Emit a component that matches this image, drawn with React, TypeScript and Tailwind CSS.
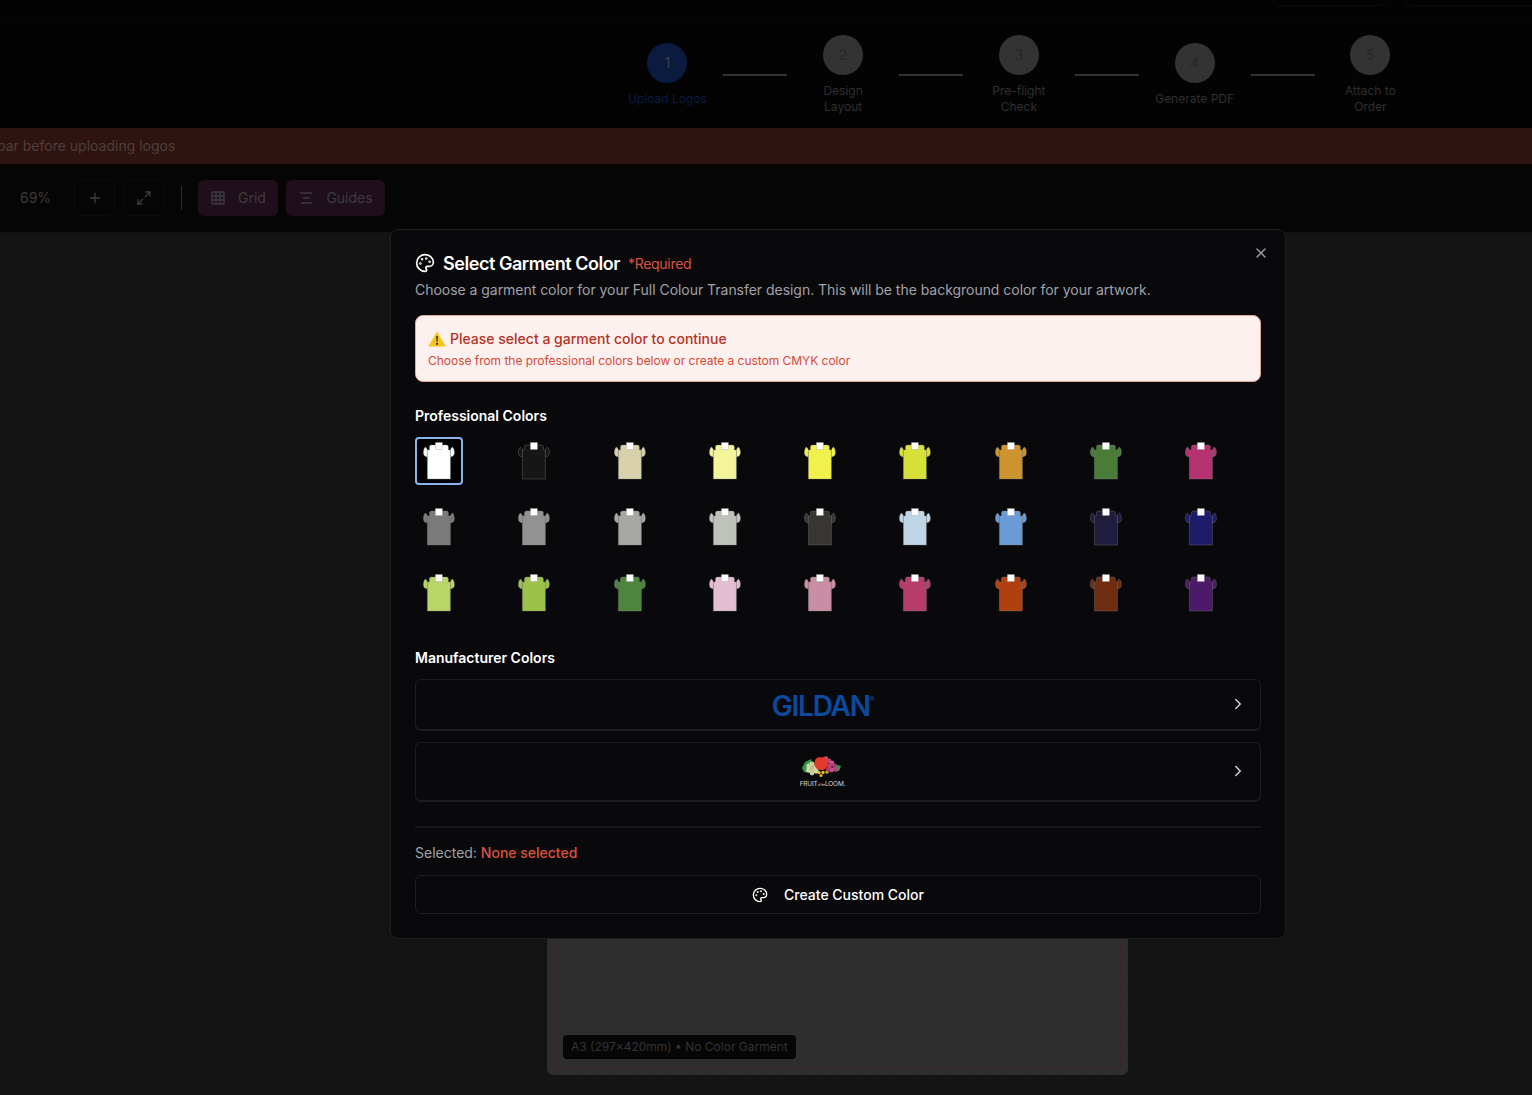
import { ChevronRight, Grid3x3, Maximize2, Palette, Plus, X } from "lucide-react";

const steps = [
  { n: 1, label: ["Upload Logos"], active: true },
  { n: 2, label: ["Design", "Layout"] },
  { n: 3, label: ["Pre-flight", "Check"] },
  { n: 4, label: ["Generate PDF"] },
  { n: 5, label: ["Attach to", "Order"] },
];

const garmentColors = [
  "#ffffff", "#161616", "#d8d1ac", "#f4f49a", "#f2f14b", "#d6e038", "#cc932e", "#4a7c38", "#b4326f",
  "#7a7a7a", "#939393", "#a7a8a3", "#bfc1bb", "#383632", "#bed6e6", "#6a9bd6", "#1f1c3e", "#1f1b6b",
  "#b8d665", "#9cc24a", "#4e853c", "#e3bfd1", "#c98ea3", "#b63c6a", "#b0400f", "#6e2c10", "#4b1a68",
];

function Shirt({ color }: { color: string }) {
  return (
    <svg width="48" height="48" viewBox="0.6 0 48 48" className="shrink-0">
      <g fill={color} stroke="#8a8a8a" strokeOpacity="0.55" strokeWidth="0.6">
        <path d="M13 20C10.5 19.5 9 18.5 9 15.5C9 13 10 10.5 11 10C12 11 13 12 13 13Z" />
        <path d="M36 20C38.5 19.5 40 18.5 40 15.5C40 13 39 10.5 38 10C37 11 36 12 36 13Z" />
        <path d="M13 42V13H15V10Q15 8 17 8H32Q34 8 34 10V13H36V42Z" />
      </g>
      <rect x="21" y="5.5" width="7" height="7" fill="#fff" stroke="#8a8a8a" strokeOpacity="0.6" strokeWidth="0.5" />
    </svg>
  );
}

function FruitLogo() {
  return (
    <div className="flex flex-col items-center">
      <svg width="40" height="22" viewBox="0 0 40 22">
        <path d="M0 12L3 6L9 3L13 14L8 17L2 16Z" fill="#2f9a45" />
        <path d="M32 8L39 10L37 15L30 15Z" fill="#2f9a45" />
        <circle cx="7" cy="10" r="2.6" fill="#d3d6a8" />
        <circle cx="10" cy="8" r="2.6" fill="#c9cd9c" />
        <circle cx="6.5" cy="14" r="2.5" fill="#d3d6a8" />
        <circle cx="10" cy="13" r="2.6" fill="#bfc48f" />
        <circle cx="14" cy="15" r="2.6" fill="#d3d6a8" />
        <circle cx="10" cy="17" r="2.4" fill="#c9cd9c" />
        <circle cx="14" cy="11" r="2.6" fill="#d3d6a8" />
        <circle cx="17" cy="16.5" r="1.7" fill="#e3b92f" />
        <circle cx="21" cy="16.5" r="1.7" fill="#e3b92f" />
        <circle cx="25" cy="16" r="1.7" fill="#e3b92f" />
        <circle cx="19" cy="19.5" r="1.5" fill="#e3b92f" />
        <circle cx="24" cy="2.5" r="2.2" fill="#c64f86" />
        <circle cx="27" cy="5" r="2.4" fill="#b8447c" />
        <circle cx="30" cy="7" r="2.4" fill="#c64f86" />
        <circle cx="27.5" cy="10" r="2.4" fill="#b8447c" />
        <circle cx="32.5" cy="10" r="2.4" fill="#a93a70" />
        <circle cx="29.5" cy="14" r="2.4" fill="#c64f86" />
        <circle cx="34" cy="13.5" r="2.3" fill="#b8447c" />
        <circle cx="26" cy="13.5" r="2.2" fill="#a93a70" />
        <path d="M19 1.5C23 0.5 26 3 26 7C26 11 23 14.5 19.5 14C15.5 14.5 12 11 12.5 7C12.5 3 15.5 0.5 19 1.5Z" fill="#e5392b" />
      </svg>
      <span className="text-[6.5px] leading-[7px] text-[#d8d8d8] mt-[3px] tracking-tight whitespace-nowrap">
        FRUIT<span className="text-[3px]">of the</span>LOOM.
      </span>
    </div>
  );
}

function PageBehind() {
  return (
    <>
      <header className="bg-[#030303]">
        <div className="h-[23px] border-b border-[#060606] flex justify-end gap-[19px]">
          <div className="w-[114px] h-[6px] border border-t-0 border-[#0b0b0b] rounded-b-md" />
          <div className="w-[127px] h-[6px] border border-t-0 border-r-0 border-[#0b0b0b] rounded-bl-md" />
        </div>
        <div className="h-[105px] pb-px flex items-center justify-end pr-[105.75px]">
          {steps.map((step, i) => (
            <div key={step.n} className="flex items-center">
              {i > 0 && <div className="w-16 h-0.5 bg-[#333333]" />}
              <div className="w-[111.75px] flex flex-col items-center">
                <div
                  className={
                    step.active
                      ? "w-10 h-10 rounded-full bg-[#0a1b3f] flex items-center justify-center text-sm text-[#3a4150]"
                      : "w-10 h-10 rounded-full bg-[#333333] flex items-center justify-center text-sm text-[#272727]"
                  }
                >
                  {step.n}
                </div>
                <div className={step.active ? "mt-2 text-xs text-center text-[#0c1c40]" : "mt-2 text-xs text-center text-[#2f2f2f]"}>
                  {step.label.map((line) => (
                    <div key={line}>{line}</div>
                  ))}
                </div>
              </div>
            </div>
          ))}
        </div>
      </header>

      <div className="h-9 bg-[#2f1310] flex items-center overflow-hidden">
        <span className="text-sm text-[#4b403e] whitespace-nowrap -ml-[3px]">bar before uploading logos</span>
      </div>

      <div className="h-[69px] bg-[#050505] border-b border-[#101010] flex items-center pl-5">
        <span className="text-sm text-[#3c3c3c] w-[54px]">69%</span>
        <button className="w-[41px] h-9 rounded-md border border-[#0b0b0b] flex items-center justify-center text-[#3c3c3c]">
          <Plus size={16} />
        </button>
        <button className="w-[41px] h-9 ml-[8px] rounded-md border border-[#0b0b0b] flex items-center justify-center text-[#3c3c3c]">
          <Maximize2 size={16} />
        </button>
        <div className="w-px h-6 bg-[#2e2e2e] ml-[17px] mr-4" />
        <button className="h-9 w-20 rounded-md bg-[#1f0e1c] flex items-center justify-center gap-3 text-sm text-[#3f3b3e]">
          <Grid3x3 size={16} />
          Grid
        </button>
        <button className="h-9 w-[99px] ml-2 rounded-md bg-[#1f0e1c] flex items-center justify-center gap-3 text-sm text-[#3f3b3e]">
          <svg width="16" height="16" viewBox="0 0 16 16" fill="none" stroke="currentColor" strokeWidth="1.4">
            <path d="M2 3H14M5 8H12M3 13H14" />
          </svg>
          Guides
        </button>
      </div>

      <main className="flex justify-center bg-[#141414] h-[862px] pl-[143px]">
        <div className="relative w-[581px] h-[821px] mt-[21px] rounded-md bg-[#2e2e2e] bg-[radial-gradient(#292929_1px,transparent_1px)] bg-[length:14px_14px]">
          <div className="absolute inset-[7px] border border-[#3a2424]" />
          <div className="absolute top-0 bottom-0 left-[290px] w-px bg-[#2a2a30]" />
          <div className="absolute left-4 bottom-4 h-6 px-2 rounded bg-[#060606] flex items-center text-xs text-[#333333] whitespace-nowrap">
            A3 (297×420mm) • No Color Garment
          </div>
        </div>
      </main>
    </>
  );
}

function GarmentModal() {
  return (
    <div className="absolute left-[390px] top-[229px] w-[896px] rounded-lg border border-[#1f1f22] bg-[#09090b] p-6 text-white">
      <button className="absolute right-4 top-[15px] text-[#a1a1aa]">
        <X size={16} />
      </button>

      <div className="flex items-center h-[18px]">
        <Palette size={20} />
        <span className="ml-2 pt-[2px] text-lg leading-none font-semibold tracking-tight">Select Garment Color</span>
        <span className="ml-2 pt-[2px] text-sm tracking-[-0.3px] text-[#d9533c]">*Required</span>
      </div>
      <p className="mt-2 text-sm text-[#a1a1aa] tracking-[-0.035px]">
        Choose a garment color for your Full Colour Transfer design. This will be the background color for your artwork.
      </p>

      <div className="mt-[15px] rounded-lg border border-[#e5a79d] bg-[#fdf1f0] px-3 pt-[13px] pb-3">
        <div className="flex items-center text-sm font-medium text-[#b4321f]">
          <svg width="18" height="16" viewBox="0 0 18 16" className="mr-1">
            <path d="M9 0.5L17.8 15.5H0.2Z" fill="#f5c518" />
            <path d="M8.2 5H9.8L9.5 11H8.5Z M8.1 12H9.9V13.8H8.1Z" fill="#2a2a2a" />
          </svg>
          Please select a garment color to continue
        </div>
        <div className="mt-1 text-xs tracking-[-0.03px] text-[#d64a36]">
          Choose from the professional colors below or create a custom CMYK color
        </div>
      </div>

      <h3 className="mt-6 text-sm font-semibold">Professional Colors</h3>
      <div className="mt-[11px] grid grid-cols-9 gap-x-[11.25px] gap-y-[18px]">
        {garmentColors.map((color, i) => (
          <button
            key={i}
            className={
              i === 0
                ? "w-12 h-12 rounded border-2 border-[#8ab4ee] bg-[#000000] flex items-center justify-center"
                : "w-12 h-12 rounded flex items-center justify-center"
            }
          >
            <Shirt color={color} />
          </button>
        ))}
      </div>

      <h3 className="mt-[31px] text-sm font-semibold">Manufacturer Colors</h3>
      <button className="mt-[11px] w-full h-[52px] rounded-md border border-b-2 border-[#1d1d20] flex items-center pr-[13px]">
        <span className="flex-1 pt-[2px] text-center text-[28px] leading-none font-semibold tracking-[-1.2px] text-[#0b4a9e]">
          GILDAN<sup className="text-[7px] align-super">®</sup>
        </span>
        <ChevronRight size={18} className="mb-[2px] text-[#d4d4d8]" />
      </button>
      <button className="mt-[11px] w-full h-[60px] rounded-md border border-b-2 border-[#1d1d20] flex items-center pr-[13px]">
        <span className="flex-1 flex justify-center pt-[2px]">
          <FruitLogo />
        </span>
        <ChevronRight size={18} className="mb-[2px] text-[#d4d4d8]" />
      </button>

      <div className="mt-6 h-0.5 bg-[#17171a]" />
      <div className="mt-[15px] text-sm text-[#a1a1aa]">
        Selected: <span className="font-medium text-[#d9533c]">None selected</span>
      </div>
      <button className="mt-3 w-full h-[39px] rounded-md border border-[#1f1f22] flex items-center justify-center gap-4 text-sm font-medium">
        <Palette size={16} />
        Create Custom Color
      </button>
    </div>
  );
}

export default function App() {
  return (
    <div className="relative h-[1095px] overflow-hidden bg-[#141414] font-['Inter',sans-serif]">
      <PageBehind />
      <GarmentModal />
    </div>
  );
}
